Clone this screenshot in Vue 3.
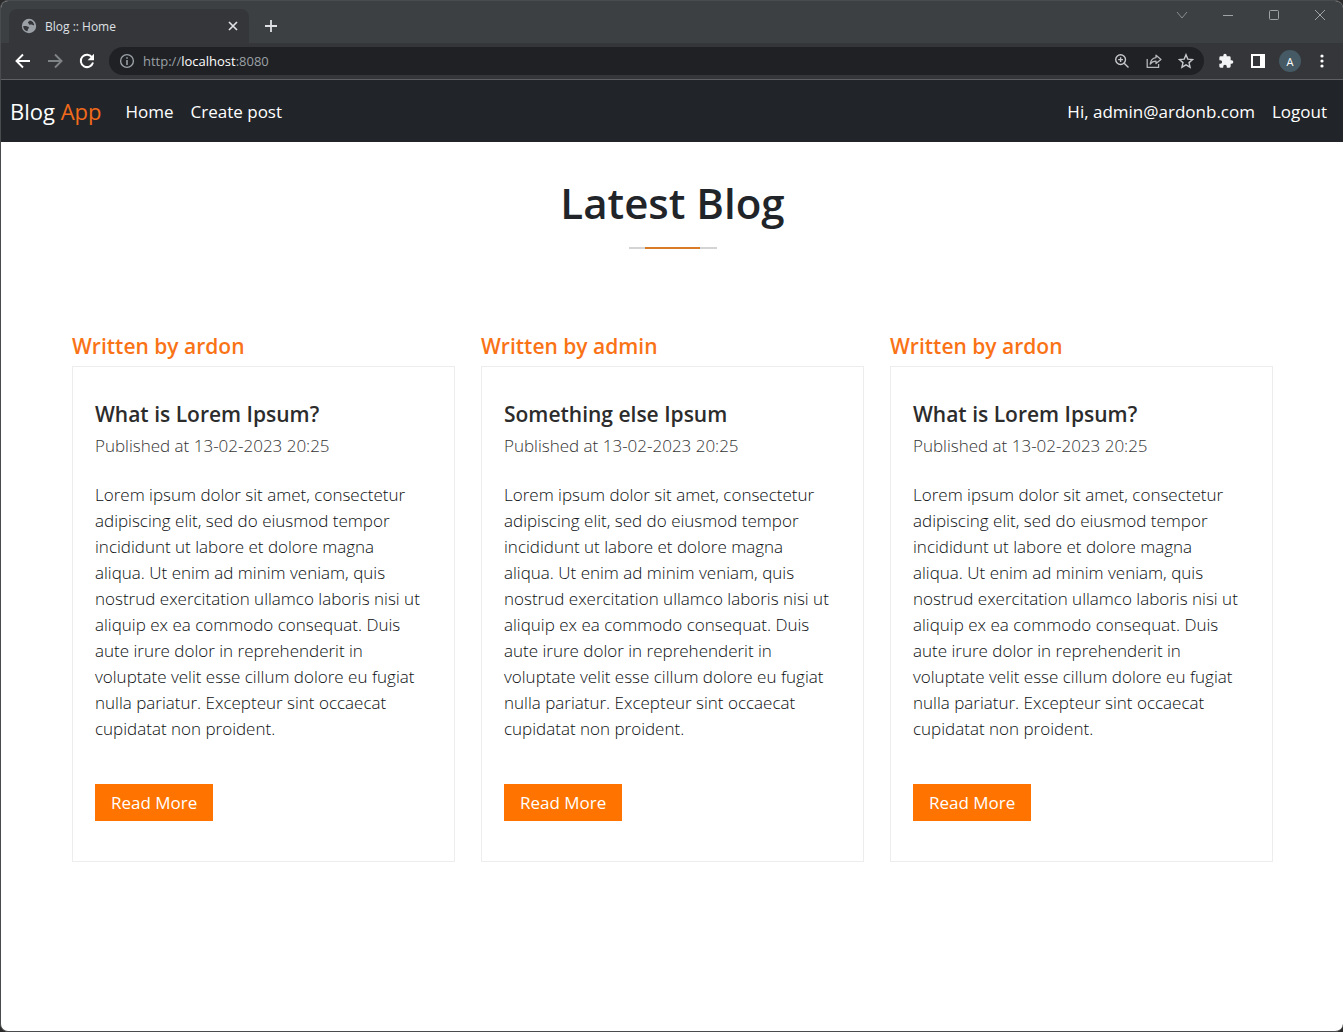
<script setup>
const excerpt =
  'Lorem ipsum dolor sit amet, consectetur adipiscing elit, sed do eiusmod tempor incididunt ut labore et dolore magna aliqua. Ut enim ad minim veniam, quis nostrud exercitation ullamco laboris nisi ut aliquip ex ea commodo consequat. Duis aute irure dolor in reprehenderit in voluptate velit esse cillum dolore eu fugiat nulla pariatur. Excepteur sint occaecat cupidatat non proident.'

const posts = [
  { id: 1, author: 'ardon', title: 'What is Lorem Ipsum?', published: '13-02-2023 20:25', excerpt },
  { id: 2, author: 'admin', title: 'Something else Ipsum', published: '13-02-2023 20:25', excerpt },
  { id: 3, author: 'ardon', title: 'What is Lorem Ipsum?', published: '13-02-2023 20:25', excerpt },
]
</script>

<template>
  <div class="window">
    <div class="tabstrip">
      <div class="tab">
        <svg class="globe" viewBox="0 0 18 18" width="18" height="18" aria-hidden="true">
          <circle cx="9" cy="9" r="7.200" fill="#9aa0a6" />
          <path fill="#35363a" d="M3.200 9c1.300.2 2.600-.2 3.500.3.800.5 2.200.3 2.300 1.200.1.900-.9 1-1.100 1.900-.1.900-.2 1.300-.8 1.900C4.800 13.800 3.200 11.600 3.200 9z" />
          <path fill="#35363a" d="M9.800 3.400c-.2 1-1.800 1-1.900 2-.1.800 1 .8 1.100 1.500.1.800 1.100 1 1.800.7.900-.4 1.400.1 2.100.5.500.3.900.2 1.300 0C13.900 5.500 12.300 3.700 9.800 3.400z" />
        </svg>
        <span class="tab-title">Blog :: Home</span>
        <button class="icon" aria-label="Close tab">
          <svg viewBox="0 0 10 10" width="10" height="10"><path d="M1 1l8 8M9 1l-8 8" stroke="#dfe1e5" stroke-width="1.700" /></svg>
        </button>
      </div>
      <button class="icon new-tab" aria-label="New tab">
        <svg viewBox="0 0 14 14" width="14" height="14"><path d="M7 1v12M1 7h12" stroke="#dfe1e5" stroke-width="1.800" /></svg>
      </button>
      <div class="window-controls">
        <button class="icon" aria-label="Search tabs">
          <svg viewBox="0 0 12 12" width="12" height="12"><path d="M1 3l5 6 5-6" fill="none" stroke="#8b8e91" /></svg>
        </button>
        <button class="icon" aria-label="Minimize">
          <svg viewBox="0 0 12 12" width="12" height="12"><path d="M1 6.500h10" stroke="#a0a3a5" /></svg>
        </button>
        <button class="icon" aria-label="Maximize">
          <svg viewBox="0 0 12 12" width="12" height="12"><rect x="1.500" y="1.500" width="9" height="9" rx="1" fill="none" stroke="#a0a3a5" /></svg>
        </button>
        <button class="icon" aria-label="Close">
          <svg viewBox="0 0 12 12" width="12" height="12"><path d="M1 1l10 10M11 1L1 11" stroke="#a0a3a5" /></svg>
        </button>
      </div>
    </div>

    <div class="toolbar">
      <button class="icon" aria-label="Back">
        <svg viewBox="0 0 16 16" width="16" height="16"><path d="M15 8H2M8 1.500L1.500 8 8 14.500" fill="none" stroke="#fff" stroke-width="1.900" /></svg>
      </button>
      <button class="icon" aria-label="Forward">
        <svg viewBox="0 0 16 16" width="16" height="16"><path d="M1 8h13M8 1.500L14.500 8 8 14.500" fill="none" stroke="#808386" stroke-width="1.900" /></svg>
      </button>
      <button class="icon" aria-label="Reload">
        <svg viewBox="0 0 16 16" width="16" height="16">
          <path d="M13.200 4.500A6.200 6.200 0 1 0 14 9.500" fill="none" stroke="#fff" stroke-width="2" />
          <path d="M15 .8v6.400H8.600z" fill="#fff" />
        </svg>
      </button>
      <div class="omnibox">
        <svg viewBox="0 0 16 16" width="16" height="16" aria-hidden="true">
          <circle cx="8" cy="8" r="6.400" fill="none" stroke="#9aa0a6" stroke-width="1.400" />
          <path d="M8 7v5M8 4.200v1.600" stroke="#9aa0a6" stroke-width="1.600" />
        </svg>
        <div class="url">
          <label for="address">http://</label>
          <input id="address" type="text" value="localhost" spellcheck="false" />
          <span>:8080</span>
        </div>
        <button class="icon" aria-label="Zoom">
          <svg viewBox="0 0 16 16" width="16" height="16">
            <g fill="none" stroke="#c4c7cb" stroke-width="1.400">
              <circle cx="6.600" cy="6.600" r="4.900" />
              <path d="M10.200 10.200l4.300 4.300M6.600 4.200V9M4.200 6.600H9" />
            </g>
          </svg>
        </button>
        <button class="icon" aria-label="Share">
          <svg viewBox="0 0 16 16" width="16" height="16">
            <g fill="none" stroke="#b4b7bb" stroke-width="1.300" stroke-linejoin="round">
              <path d="M1.200 6v8.400h11.400V11" />
              <path d="M10 2.200l5 4.200-5 4.200V8.200c-2.600 0-4.400.8-5.800 2.900.4-3.600 2.300-6 5.800-6.500z" />
            </g>
          </svg>
        </button>
        <button class="icon" aria-label="Bookmark this tab">
          <svg viewBox="0 0 16 16" width="16" height="16">
            <path d="M8 1.700l1.800 4.400 4.800.4-3.600 3.100 1.100 4.600L8 11.800l-4.100 2.400L5 9.600 1.400 6.500l4.800-.4z" fill="none" stroke="#c4c7cb" stroke-width="1.400" />
          </svg>
        </button>
      </div>
      <button class="icon" aria-label="Extensions">
        <svg viewBox="0 0 24 24" width="16" height="16">
          <path fill="#f1f3f4" d="M20.500 11H19V7a2 2 0 0 0-2-2h-4V3.500a2.500 2.500 0 0 0-5 0V5H4a2 2 0 0 0-2 2v3.800h1.500a2.700 2.700 0 0 1 0 5.400H2V20c0 1.100.9 2 2 2h3.800v-1.500a2.700 2.700 0 0 1 5.400 0V22H17a2 2 0 0 0 2-2v-4h1.500a2.500 2.500 0 0 0 0-5z" />
        </svg>
      </button>
      <button class="icon" aria-label="Side panel">
        <svg viewBox="0 0 16 16" width="16" height="16"><path fill="#fff" fill-rule="evenodd" d="M1 1h14v14H1zM3 3v10h7V3z" /></svg>
      </button>
      <button class="icon avatar" aria-label="Profile">A</button>
      <button class="icon" aria-label="Menu">
        <svg viewBox="0 0 16 16" width="16" height="16" fill="#fff">
          <circle cx="8" cy="3" r="1.600" /><circle cx="8" cy="8" r="1.600" /><circle cx="8" cy="13" r="1.600" />
        </svg>
      </button>
    </div>

    <header class="navbar">
      <a class="brand" href="#">Blog <span>App</span></a>
      <nav class="links">
        <a href="#">Home</a>
        <a href="#">Create post</a>
      </nav>
      <div class="links account">
        <a href="#">Hi, admin@ardonb.com</a>
        <a href="#">Logout</a>
      </div>
    </header>

    <main class="page">
      <h1>Latest Blog</h1>
      <div class="divider"></div>
      <div class="posts">
        <section v-for="post in posts" :key="post.id" class="post">
          <h2>Written by {{ post.author }}</h2>
          <article class="card">
            <h3>{{ post.title }}</h3>
            <p class="date">Published at {{ post.published }}</p>
            <p class="excerpt">{{ post.excerpt }}</p>
            <a class="more" href="#">Read More</a>
          </article>
        </section>
      </div>
    </main>
  </div>
</template>

<style>
body {
  margin: 0;
  background: #2b2b2b;
}
</style>

<style scoped>
* {
  box-sizing: border-box;
}
.window {
  display: flex;
  flex-direction: column;
  min-height: 100vh;
  border: 1px solid #4a4b4d;
  border-right: 0;
  border-radius: 8px;
  overflow: hidden;
  background: #fff;
  font-family: "Open Sans", "Noto Sans", sans-serif;
  color: #212529;
}
a {
  color: inherit;
  text-decoration: none;
}
.icon {
  display: flex;
  align-items: center;
  justify-content: center;
  flex: none;
  width: 32px;
  height: 28px;
  padding: 0;
  border: 0;
  background: none;
}
.tabstrip {
  display: flex;
  align-items: flex-end;
  height: 42px;
  padding-left: 8px;
  background: #3c4043;
}
.tab {
  display: flex;
  align-items: center;
  width: 240px;
  height: 34px;
  padding-left: 11px;
  border-radius: 8px 8px 0 0;
  background: #35363a;
  color: #dfe1e5;
  font-size: 12px;
}
.tab-title {
  flex: 1;
  padding-left: 7px;
}
.new-tab {
  width: 44px;
  height: 34px;
}
.window-controls {
  display: flex;
  align-self: flex-start;
  margin-left: auto;
}
.window-controls .icon {
  width: 46px;
}
.toolbar {
  display: flex;
  align-items: center;
  height: 37px;
  padding: 0 5px 0 6px;
  border-bottom: 1px solid #5f6063;
  background: #35363a;
}
.omnibox {
  display: flex;
  align-items: center;
  flex: 1;
  height: 28px;
  margin: 0 6px;
  padding: 0 2px 0 10px;
  border-radius: 14px;
  background: #202124;
}
.url {
  display: flex;
  align-items: center;
  flex: 1;
  padding-left: 8px;
  color: #9aa0a6;
  font-size: 13px;
}
.url input {
  field-sizing: content;
  padding: 0;
  border: 0;
  outline: 0;
  background: none;
  color: #fff;
  font: inherit;
}
.avatar {
  width: 22px;
  height: 22px;
  margin: 0 5px;
  border-radius: 50%;
  background: #455a64;
  color: #fff;
  font-family: inherit;
  font-size: 11px;
}
.navbar {
  display: flex;
  align-items: center;
  height: 62px;
  padding: 0 16px 0 9px;
  background: #212529;
  color: #fff;
  font-size: 17px;
}
.brand {
  margin-right: 24px;
  font-size: 22px;
}
.brand span {
  color: #f26a1b;
}
.links {
  display: flex;
  gap: 17px;
}
.account {
  margin-left: auto;
}
.page {
  padding: 34px 20px 0 21px;
}
h1 {
  margin: 0;
  font-size: 42px;
  font-weight: 600;
  line-height: 53px;
  text-align: center;
}
.divider {
  width: 88px;
  height: 2px;
  margin: 18px auto 84px;
  background: linear-gradient(to right, #d4d4d4 16px, #d97a26 16px 71px, #d4d4d4 71px);
}
.posts {
  display: grid;
  grid-template-columns: repeat(3, 1fr);
  gap: 26px;
  max-width: 1201px;
  margin: 0 auto;
}
h2,
h3 {
  margin: 0;
  font-size: 21px;
  font-weight: 600;
  line-height: 26px;
}
h2 {
  margin-bottom: 7px;
  color: #f97316;
}
.card {
  padding: 34px 26px 40px 22px;
  border: 1px solid #ededed;
}
h3 {
  color: #2c2c2c;
}
.date,
.excerpt {
  margin: 0;
  font-size: 17px;
  font-weight: 300;
  line-height: 26px;
}
.date {
  margin: 6px 0 23px;
  color: #333;
}
.excerpt {
  margin-bottom: 42px;
  color: #0c0f12;
}
.more {
  display: inline-block;
  padding: 0 16px;
  background: #ff7400;
  color: #fff;
  font-size: 17px;
  line-height: 37px;
}
</style>
